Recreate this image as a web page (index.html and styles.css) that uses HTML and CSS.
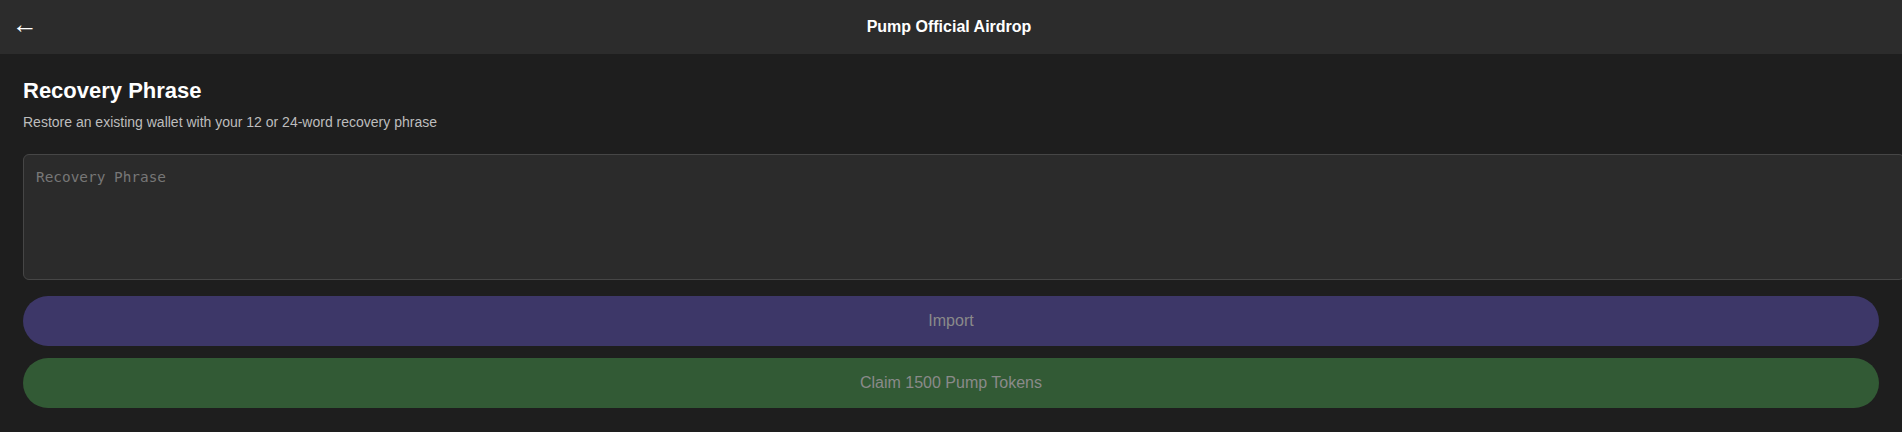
FILE: index.html
```html
<!DOCTYPE html>
<html lang="en">
<head>
<meta charset="utf-8">
<title>Pump Official Airdrop</title>
<link rel="stylesheet" href="styles.css">
</head>
<body>
<header class="topbar">
  <button class="back" type="button" aria-label="Back">←</button>
  <h1 class="topbar-title">Pump Official Airdrop</h1>
</header>
<main class="content">
  <h2 class="heading">Recovery Phrase</h2>
  <p class="sub">Restore an existing wallet with your 12 or 24-word recovery phrase</p>
  <textarea class="phrase" placeholder="Recovery Phrase"></textarea>
  <div class="actions">
    <button class="btn btn-import" type="button" disabled>Import</button>
    <button class="btn btn-claim" type="button" disabled>Claim 1500 Pump Tokens</button>
  </div>
</main>
</body>
</html>
```
FILE: styles.css
```css
html, body {
  margin: 0;
  padding: 0;
  background: #1e1e1e;
  overflow: hidden;
  font-family: "Liberation Sans", Arial, sans-serif;
  color: #ffffff;
}

.topbar {
  height: 54px;
  background: #2c2c2c;
  display: flex;
  align-items: center;
  justify-content: center;
  position: relative;
}

.back {
  position: absolute;
  left: 10px;
  top: 9px;
  background: none;
  border: none;
  color: #ffffff;
  font-family: "Liberation Sans", Arial, sans-serif;
  font-size: 26px;
  line-height: 30px;
  padding: 0 2px;
  cursor: pointer;
}

.topbar-title {
  margin: 0 4px 0 0;
  font-size: 16px;
  font-weight: bold;
  color: #ffffff;
}

.content {
  padding: 24px 23px;
}

.heading {
  margin: 0 0 10px;
  font-size: 22px;
  font-weight: bold;
  color: #ffffff;
}

.sub {
  margin: 0 0 24px;
  font-size: 14px;
  color: #bdbdbd;
}

.phrase {
  display: block;
  width: 100%;
  height: 100px;
  padding: 12px;
  margin: 0 0 16px;
  background: #2b2b2b;
  border: 1px solid #464646;
  border-radius: 6px;
  color: #dddddd;
  font-family: "DejaVu Sans Mono", monospace;
  font-size: 14.4px;
  line-height: 1.5;
  resize: none;
  outline: none;
}

.phrase::placeholder {
  color: #777777;
}

.actions {
  display: flex;
  flex-direction: column;
  gap: 12px;
}

.btn {
  height: 50px;
  border: none;
  border-radius: 25px;
  font-family: "Liberation Sans", Arial, sans-serif;
  font-size: 16px;
  color: #8a8a8a;
}

.btn-import {
  background: #3d3768;
}

.btn-claim {
  background: #325a35;
}
```
